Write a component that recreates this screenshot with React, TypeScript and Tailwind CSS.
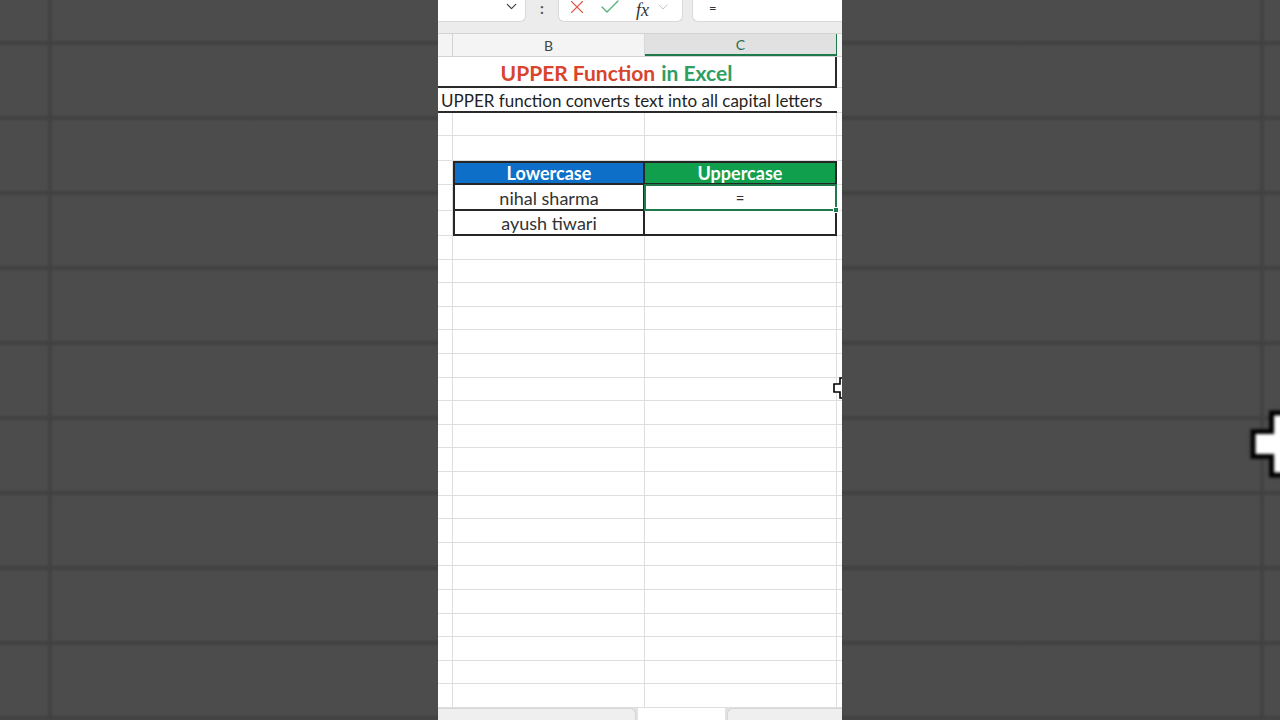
import { Check, ChevronDown, X } from "lucide-react";

const font = { fontFamily: "Lato, 'Liberation Sans', sans-serif" };

function GridRow({ h }: { h: string }) {
  return (
    <div className={`flex shrink-0 border-b border-[#dedede] ${h}`}>
      <div className="w-[15px] shrink-0 border-r border-[#dedede]" />
      <div className="w-[192px] shrink-0 border-r border-[#dedede]" />
      <div className="w-[192px] shrink-0 border-r border-[#dedede]" />
      <div className="flex-1" />
    </div>
  );
}

function PlusCursor({ className }: { className: string }) {
  return (
    <svg viewBox="0 0 22 22" className={className}>
      <polygon
        points="7,1 15,1 15,7 21,7 21,15 15,15 15,21 7,21 7,15 1,15 1,7 7,7"
        fill="#ffffff"
        stroke="#000000"
        strokeWidth="1.6"
        strokeLinejoin="miter"
      />
    </svg>
  );
}

function SideBackdrop({ side }: { side: "left" | "right" }) {
  return (
    <div
      className={
        side === "left"
          ? "relative h-full w-[438px] shrink-0 overflow-hidden bg-[#4c4c4c] [background-image:repeating-linear-gradient(to_bottom,transparent_0px,transparent_39px,#414141_43px,transparent_47px,transparent_75px),linear-gradient(to_right,transparent_46px,#424242_50px,transparent_54px)]"
          : "relative h-full flex-1 overflow-hidden bg-[#4c4c4c] [background-image:repeating-linear-gradient(to_bottom,transparent_0px,transparent_39px,#414141_43px,transparent_47px,transparent_75px),linear-gradient(to_right,transparent_416px,#424242_420px,transparent_424px)]"
      }
    >
      {side === "right" && (
        <PlusCursor className="absolute left-[408px] top-[410px] h-[68px] w-[68px] blur-[1.5px]" />
      )}
    </div>
  );
}

export default function App() {
  const rows = Array.from({ length: 20 });

  return (
    <div className="flex h-[720px] w-[1280px] overflow-hidden bg-[#4c4c4c]" style={font}>
      <SideBackdrop side="left" />

      <div className="relative flex h-full w-[404px] shrink-0 flex-col overflow-hidden bg-white">
        {/* formula bar strip */}
        <div className="flex h-[33px] shrink-0 items-start bg-[#ececec]">
          <div className="flex h-[22px] w-[88px] shrink-0 items-start justify-end rounded-br-[6px] border-b border-r border-[#d9d9d9] bg-white pr-[5px]">
            <ChevronDown className="-mt-[2px] size-[17px] text-[#3c3c3c]" strokeWidth={1.6} />
          </div>
          <div className="flex h-[16px] w-[32px] shrink-0 items-center justify-center text-[15px] font-bold leading-none text-[#555]">
            :
          </div>
          <div className="flex h-[22px] w-[125px] shrink-0 items-start rounded-b-[6px] border-x border-b border-[#d9d9d9] bg-white pl-[7px]">
            <X className="-mt-[4px] size-[22px] text-[#e2574b]" strokeWidth={1.2} />
            <Check className="-mt-[5px] ml-[10px] size-[24px] text-[#4caf78]" strokeWidth={1.2} />
            <span
              className="mt-[1px] ml-[14px] text-[18px] italic leading-none text-[#333]"
              style={{ fontFamily: "'Liberation Serif', serif" }}
            >
              fx
            </span>
            <ChevronDown className="-mt-[1px] ml-[6px] size-[16px] text-[#c4c4c4]" strokeWidth={1.4} />
          </div>
          <div className="w-[9px] shrink-0" />
          <div className="flex h-[22px] flex-1 items-start rounded-bl-[6px] border-b border-l border-[#d9d9d9] bg-white pl-[16px]">
            <span className="mt-[2px] text-[13px] leading-none text-[#333]">=</span>
          </div>
        </div>

        {/* column headers */}
        <div className="flex h-[24px] shrink-0 border-y border-[#d2d2d2] bg-[#f4f4f4] text-[14px] text-[#444]">
          <div className="w-[15px] shrink-0 border-r border-[#d2d2d2]" />
          <div className="flex w-[192px] shrink-0 items-center justify-center border-r border-[#d8d8d8]">B</div>
          <div className="flex w-[192px] shrink-0 items-center justify-center border-b-2 border-r border-[#1f7a4b] bg-[#e1e1e1] text-[#2a6e4c]">
            C
          </div>
          <div className="flex-1" />
        </div>

        {/* title */}
        <div className="flex h-[31px] shrink-0">
          <div className="flex w-[399px] shrink-0 items-center justify-center border-b-2 border-r-2 border-[#2a2a2a] pr-[40px] pt-[2px] text-[21px] font-bold">
            <span className="text-[#d8442c]">UPPER Function</span>
            <span className="ml-[6px] text-[#2e9e63]">in Excel</span>
          </div>
          <div className="flex-1 border-b border-[#dedede]" />
        </div>

        {/* description */}
        <div className="flex h-[25px] shrink-0">
          <div className="flex w-[399px] shrink-0 items-center overflow-hidden whitespace-nowrap border-b-2 border-[#2a2a2a] pl-[3px] pt-[3px] text-[17px] text-[#1f1f1f]">
            UPPER function converts text into all capital letters
          </div>
          <div className="flex-1 border-b border-[#dedede]" />
        </div>

        <GridRow h="h-[23px]" />
        <GridRow h="h-[25px]" />

        {/* table */}
        <div className="flex h-[75px] shrink-0">
          <div className="flex w-[15px] shrink-0 flex-col">
            <div className="h-[24px] border-b border-r border-[#dedede]" />
            <div className="h-[26px] border-b border-r border-[#dedede]" />
            <div className="h-[25px] border-b border-r border-[#dedede]" />
          </div>
          <div className="flex w-[384px] shrink-0 flex-col border-2 border-[#262626] text-[18px] leading-none">
            <div className="flex h-[22px] border-b-2 border-[#262626] font-bold text-white">
              <div className="flex w-[190px] items-center justify-center border-r-2 border-[#262626] bg-[#0d6fc8]">
                Lowercase
              </div>
              <div className="flex flex-1 items-center justify-center bg-[#10a04d]">Uppercase</div>
            </div>
            <div className="flex h-[26px] border-b-2 border-[#262626] text-[#333]">
              <div className="flex w-[190px] items-center justify-center border-r-2 border-[#262626] pt-[2px]">
                nihal sharma
              </div>
              <div className="relative flex flex-1 items-center justify-center pt-[2px] text-[15px]">
                =
                <div className="absolute -bottom-[2px] -left-[1px] -right-[2px] -top-[1px] border-2 border-[#1e7a4a]" />
                <div className="absolute -bottom-[4px] -right-[4px] size-[6px] border border-white bg-[#1e7a4a]" />
              </div>
            </div>
            <div className="flex flex-1 text-[#333]">
              <div className="flex w-[190px] items-center justify-center border-r-2 border-[#262626]">
                ayush tiwari
              </div>
              <div className="flex-1" />
            </div>
          </div>
          <div className="flex flex-1 flex-col">
            <div className="h-[24px] border-b border-[#dedede]" />
            <div className="h-[26px] border-b border-[#dedede]" />
            <div className="h-[25px] border-b border-[#dedede]" />
          </div>
        </div>

        {rows.map((_, i) => (
          <GridRow key={i} h="h-[23.6px]" />
        ))}

        {/* sheet tab strip */}
        <div className="flex h-[12px] shrink-0 bg-[#e2e2e2]">
          <div className="w-[198px] shrink-0 rounded-tr-[6px] border-r border-t border-[#d6d6d6] bg-[#efefef]" />
          <div className="ml-[2px] w-[87px] shrink-0 bg-white" />
          <div className="ml-[2px] flex-1 rounded-tl-[6px] border-l border-t border-[#d6d6d6] bg-[#efefef]" />
        </div>

        <PlusCursor className="absolute left-[395px] top-[377px] h-[22px] w-[22px]" />
      </div>

      <SideBackdrop side="right" />
    </div>
  );
}
